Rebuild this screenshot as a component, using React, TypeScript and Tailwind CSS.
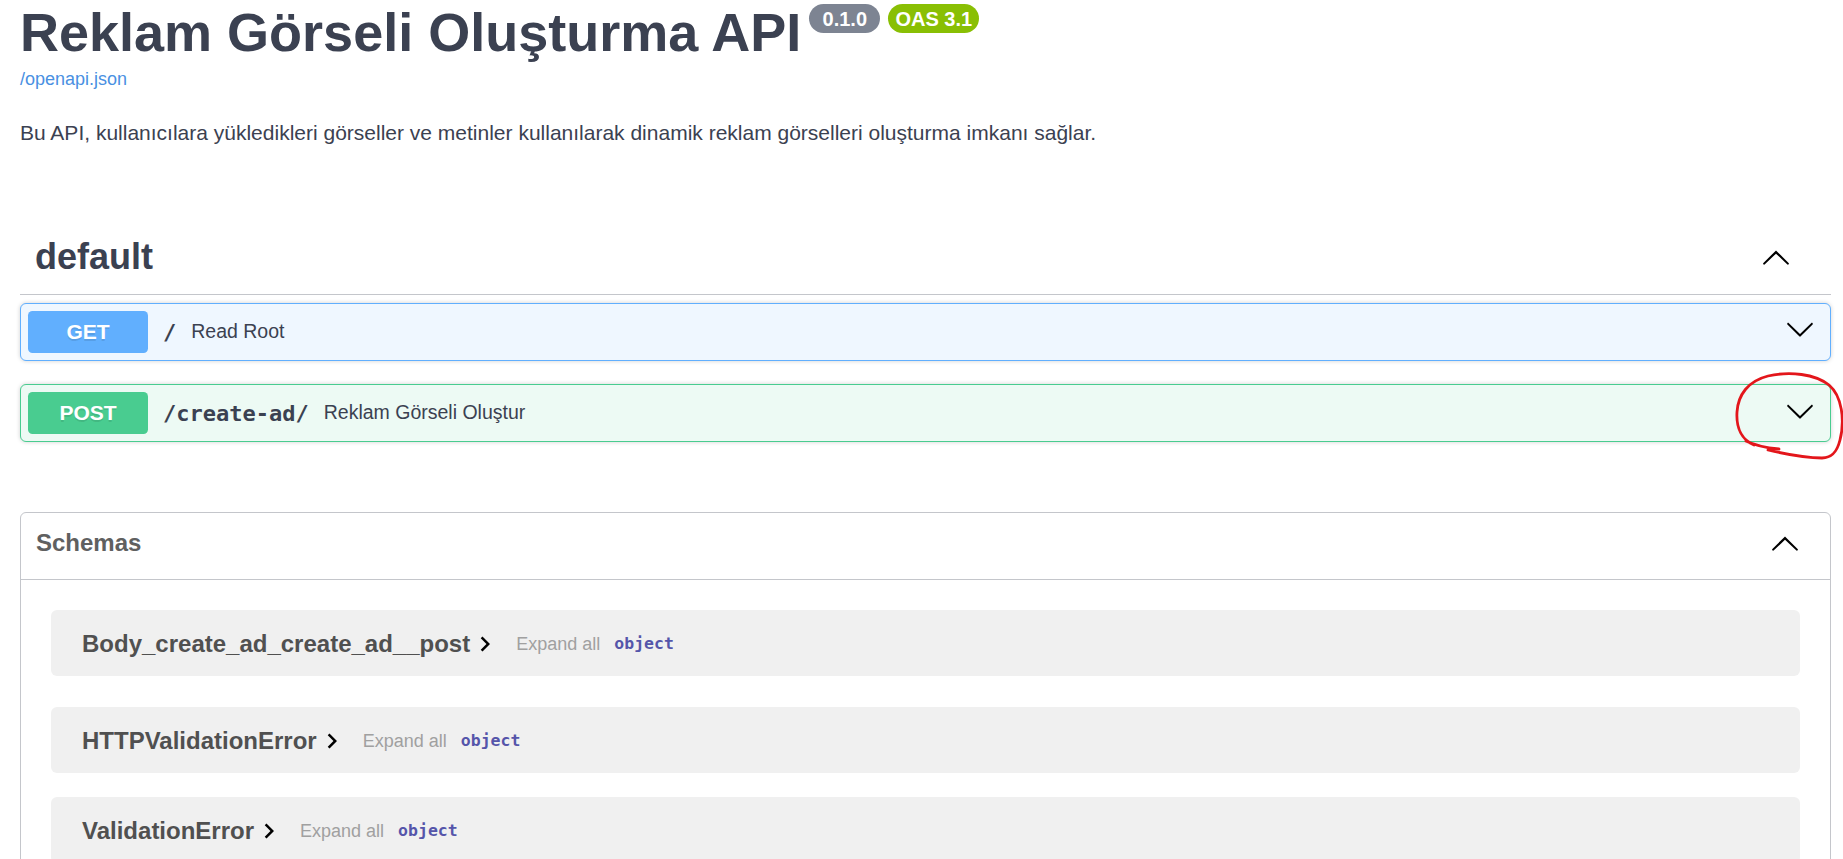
import React from "react";

const DownArrow = ({ className = "" }: { className?: string }) => (
  <svg viewBox="0 0 20 20" width="30" height="30" className={className} fill="#000">
    <path d="M17.418 6.109c.272-.268.709-.268.979 0s.271.701 0 .969l-7.908 7.83c-.27.268-.707.268-.979 0l-7.908-7.830c-.27-.268-.27-.701 0-.969.271-.268.709-.268.979 0L10 13.25l7.418-7.141z" />
  </svg>
);

const UpArrow = ({ className = "" }: { className?: string }) => (
  <svg viewBox="0 0 20 20" width="30" height="30" className={className} fill="#000">
    <path d="M17.418 14.908c.272.268.709.268.979 0s.271-.701 0-.969l-7.908-7.83c-.27-.268-.707-.268-.979 0l-7.908 7.83c-.27.268-.27.701 0 .969.271.268.709.268.979 0L10 7.767l7.418 7.141z" />
  </svg>
);

const RightChevron = () => (
  <svg viewBox="0 0 24 24" width="30" height="30" className="shrink-0" fill="#000">
    <path d="M10 6L8.59 7.41 13.17 12l-4.58 4.59L10 18l6-6z" />
  </svg>
);

const Op = ({
  method,
  path,
  desc,
  border,
  bg,
  btn,
  arrowClass,
  className = "",
}: {
  method: string;
  path: string;
  desc: string;
  border: string;
  bg: string;
  btn: string;
  arrowClass: string;
  className?: string;
}) => (
  <div
    className={`flex h-[58px] items-center rounded-[6px] border p-[7px] shadow-[0_0_4px_rgba(0,0,0,0.19)] ${border} ${bg} ${className}`}
  >
    <div
      className={`flex h-[42px] w-[120px] shrink-0 items-center justify-center rounded-[4.5px] text-[21px] font-bold text-white [text-shadow:0_1.5px_0_rgba(0,0,0,0.1)] ${btn}`}
    >
      {method}
    </div>
    <span className="px-[15px] font-['DejaVu_Sans_Mono',monospace] text-[22px] font-bold text-[#3b4151]">
      {path}
    </span>
    <span className="text-[19.5px] text-[#3b4151]">{desc}</span>
    <DownArrow className={`ml-auto mr-[8px] shrink-0 ${arrowClass}`} />
  </div>
);

const Model = ({ name, className = "" }: { name: string; className?: string }) => (
  <div className={`mx-[30px] flex h-[66px] items-center rounded-[6px] bg-[#f0f0f0] pl-[31px] pt-[2px] ${className}`}>
    <span className="text-[24px] font-bold leading-[28px] text-[#505050]">{name}</span>
    <RightChevron />
    <span className="ml-[16px] text-[18px] text-[#a0a0a0]">Expand all</span>
    <span className="ml-[14px] font-['DejaVu_Sans_Mono',monospace] text-[16.5px] font-bold text-[#55a]">object</span>
  </div>
);

export default function App() {
  return (
    <div className="relative h-[859px] w-[1843px] overflow-hidden bg-white font-['Liberation_Sans',Arial,sans-serif] text-[#3b4151]">
      <div className="pl-[20px] pr-[12px]">
        {/* Info */}
        <div className="flex items-start">
          <h2 className="mt-[5px] text-[54px] font-bold leading-[54px] text-[#3b4151]">
            Reklam Görseli Oluşturma API
          </h2>
          <span className="ml-[8px] mt-[4px] flex h-[29px] w-[71px] items-center justify-center rounded-full bg-[#7d8492] text-[20px] font-bold text-white">
            0.1.0
          </span>
          <span className="ml-[8px] mt-[4px] flex h-[29px] w-[91px] items-center justify-center rounded-full bg-[#89bf04] text-[20px] font-bold text-white">
            OAS 3.1
          </span>
        </div>
        <div className="mt-[10px] text-[18px] leading-[21px]">
          <a className="text-[#4990e2]">/openapi.json</a>
        </div>
        <p className="mt-[31px] text-[21px] leading-[24px] text-[#3b4151]">
          Bu API, kullanıcılara yükledikleri görseller ve metinler kullanılarak dinamik reklam görselleri oluşturma imkanı sağlar.
        </p>

        {/* Tag */}
        <div className="mt-[76px] flex items-center border-b border-[#c4c6cb] pb-[16px] pl-[15px] pr-[30px] pt-[15px]">
          <h3 className="text-[36px] font-bold leading-[42px] text-[#3b4151]">default</h3>
          <UpArrow className="ml-auto mr-[10px] shrink-0" />
        </div>

        <Op
          className="mt-[8px]"
          method="GET"
          path="/"
          desc="Read Root"
          border="border-[#61affe]"
          bg="bg-[#eff7ff]"
          btn="bg-[#61affe]"
          arrowClass="mb-[6px]"
        />
        <Op
          className="mt-[23px]"
          method="POST"
          path="/create-ad/"
          desc="Reklam Görseli Oluştur"
          border="border-[#49cc90]"
          bg="bg-[#edfaf4]"
          btn="bg-[#49cc90]"
          arrowClass="mb-[5px]"
        />

        {/* Schemas */}
        <div className="mt-[70px] rounded-[6px] border border-[#c4c6cb] pb-[40px]">
          <div className="flex items-center border-b border-[#c4c6cb] pb-[21px] pl-[15px] pr-[30px] pt-[15px]">
            <h4 className="text-[24px] font-bold leading-[28px] text-[#606060]">Schemas</h4>
            <UpArrow className="ml-auto shrink-0" />
          </div>
          <Model className="mt-[30px]" name="Body_create_ad_create_ad__post" />
          <Model className="mt-[31px]" name="HTTPValidationError" />
          <Model className="mt-[24px]" name="ValidationError" />
        </div>
      </div>

      {/* Red annotation circle */}
      <svg
        className="pointer-events-none absolute left-0 top-0"
        width="1843"
        height="859"
        viewBox="0 0 1843 859"
        fill="none"
      >
        <path
          d="M1754 445 C1742 440 1736 428 1737 412 C1738 395 1748 381 1768 376 C1790 371 1815 374 1829 385 C1842 396 1845 420 1840 440 C1837 452 1832 458 1822 458 C1805 458 1785 454 1768 450 M1746 441 C1756 446 1768 448 1779 449"
          stroke="#e3161b"
          strokeWidth="2.8"
          strokeLinecap="round"
        />
      </svg>
    </div>
  );
}
